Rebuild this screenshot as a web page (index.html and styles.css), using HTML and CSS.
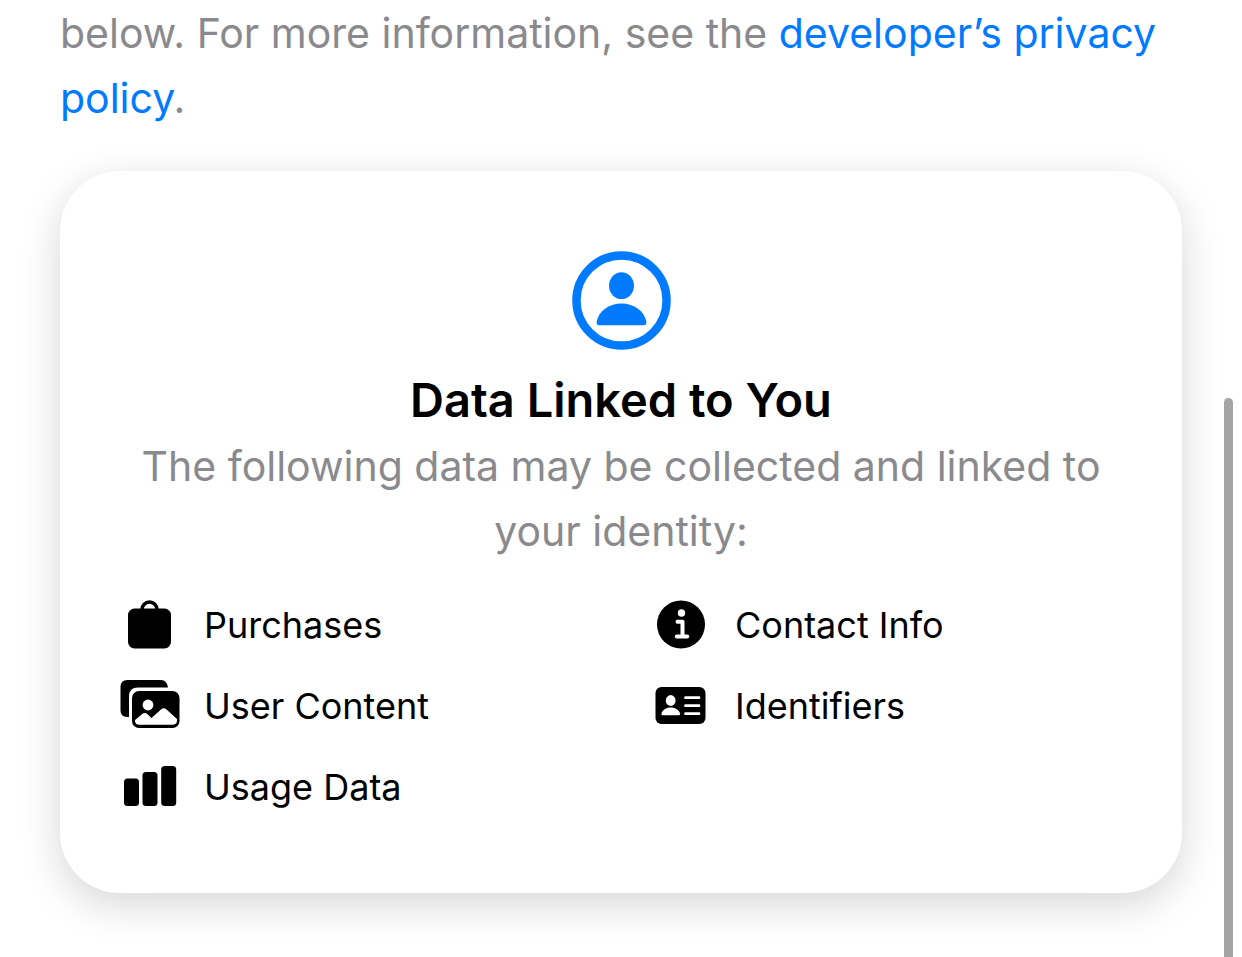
FILE: index.html
```html
<!DOCTYPE html>
<html lang="en">
<head>
<meta charset="utf-8">
<meta name="viewport" content="width=device-width, initial-scale=1">
<title>App Privacy</title>
<link rel="stylesheet" href="styles.css">
</head>
<body>
<main class="privacy">
  <p class="intro">below. For more information, see the <a href="#policy">developer’s privacy policy</a>.</p>
  <section class="card" aria-labelledby="card-title">
    <svg class="card-icon" viewBox="0 0 100 100" aria-hidden="true">
      <circle cx="50" cy="50" r="45.5" fill="none" stroke="currentColor" stroke-width="8.5"/>
      <ellipse cx="50" cy="35" rx="12.6" ry="13.6" fill="currentColor"/>
      <path d="M27.500 75Q24.300 75 25 71C27 61 37 53 50 53S73 61 75 71Q75.700 75 72.500 75Z" fill="currentColor"/>
    </svg>
    <h2 class="card-title" id="card-title">Data Linked to You</h2>
    <p class="card-text">The following data may be collected and linked to your identity:</p>
    <ul class="data-list">
      <li class="data-item">
        <svg class="data-icon" viewBox="0 0 60 54" aria-hidden="true">
          <rect x="8" y="10.500" width="43" height="40" rx="6.500"/>
          <path d="M22 13V11.500a7.500 7.500 0 0 1 15 0v1.500" fill="none" stroke="#000" stroke-width="3.600"/>
        </svg>
        <span>Purchases</span>
      </li>
      <li class="data-item">
        <svg class="data-icon" viewBox="0 0 60 54" aria-hidden="true">
          <circle cx="30" cy="26.500" r="24"/>
          <circle cx="30.500" cy="15" r="3.700" fill="#fff"/>
          <path d="M26.500 23.700h5v14M25.800 38.500h10.500" fill="none" stroke="#fff" stroke-width="4" stroke-linecap="round" stroke-linejoin="round"/>
        </svg>
        <span>Contact Info</span>
      </li>
      <li class="data-item">
        <svg class="data-icon" viewBox="0 0 60 54" aria-hidden="true">
          <path d="M7.500 1H41Q47 1 48 8.500H18Q9 8.500 9 17.500V38H7Q.500 37.500 .500 31.500V8Q.500 1 7.500 1Z"/>
          <rect x="12" y="12" width="47.500" height="37" rx="7"/>
          <circle cx="28" cy="26" r="5.400" fill="#fff"/>
          <path d="M15 41L22.500 34.700Q25 33 27.500 35.300L31.500 39L41 30.500Q43.800 28.200 46.500 30.500L57 40V41.500Q57 45.800 52 45.800H19.500Q15 45.800 15 41.500Z" fill="#fff"/>
        </svg>
        <span>User Content</span>
      </li>
      <li class="data-item">
        <svg class="data-icon" viewBox="0 0 60 54" aria-hidden="true">
          <rect x="4.500" y="8" width="50" height="37" rx="6"/>
          <ellipse cx="19.700" cy="21.500" rx="4.900" ry="5.400" fill="#fff"/>
          <path d="M11.500 36.300Q10 36.300 10.500 34.500C11.500 31 15 28.500 19.700 28.500S28 31 29 34.500Q29.500 36.300 28 36.300Z" fill="#fff"/>
          <path d="M34.500 18.700h13.500M34.500 26.700h13.500M34.500 34.700h13.500" stroke="#fff" stroke-width="2.800" stroke-linecap="round"/>
        </svg>
        <span>Identifiers</span>
      </li>
      <li class="data-item">
        <svg class="data-icon" viewBox="0 0 60 54" aria-hidden="true">
          <rect x="4" y="18.500" width="15" height="27.500" rx="3.500"/>
          <rect x="22.500" y="12" width="15" height="34" rx="3.500"/>
          <rect x="41.200" y="6" width="15" height="40" rx="3.500"/>
        </svg>
        <span>Usage Data</span>
      </li>
    </ul>
  </section>
</main>
<div class="scroll-thumb"></div>
</body>
</html>
```
FILE: styles.css
```css
html {
  overflow: hidden;
}

body {
  margin: 0;
  background: #fff;
  color: #000;
  font-family: Inter, "Liberation Sans", sans-serif;
}

.privacy {
  padding: 1px 60px 64px;
}

.intro {
  margin: 0 0 40px;
  color: #8a8a8e;
  font-size: 41px;
  line-height: 65px;
}

.intro a {
  color: #007aff;
  text-decoration: none;
}

.card {
  display: flex;
  flex-direction: column;
  align-items: center;
  padding: 80px 60px 79px;
  border-radius: 60px;
  background: #fff;
  box-shadow: 0 12px 40px rgba(0, 0, 0, 0.16);
}

.card-icon {
  width: 99px;
  height: 99px;
  color: #007aff;
}

.card-title {
  margin: 16px 0 0;
  font-size: 47px;
  font-weight: 600;
  line-height: 68px;
  text-align: center;
}

.card-text {
  margin: 0;
  color: #8a8a8e;
  font-size: 41px;
  line-height: 65px;
  text-align: center;
}

.data-list {
  display: grid;
  grid-template-columns: 1fr 1fr;
  column-gap: 60px;
  row-gap: 27px;
  align-self: stretch;
  margin: 34px 0 0;
  padding: 0;
  list-style: none;
}

.data-item {
  display: flex;
  align-items: center;
  gap: 24px;
  font-size: 36px;
  line-height: 54px;
}

.data-icon {
  flex: none;
  width: 60px;
  height: 54px;
}

.scroll-thumb {
  position: fixed;
  top: 398px;
  right: 9px;
  bottom: -12px;
  width: 9px;
  border-radius: 5px;
  background: #a4a4a4;
}
```
